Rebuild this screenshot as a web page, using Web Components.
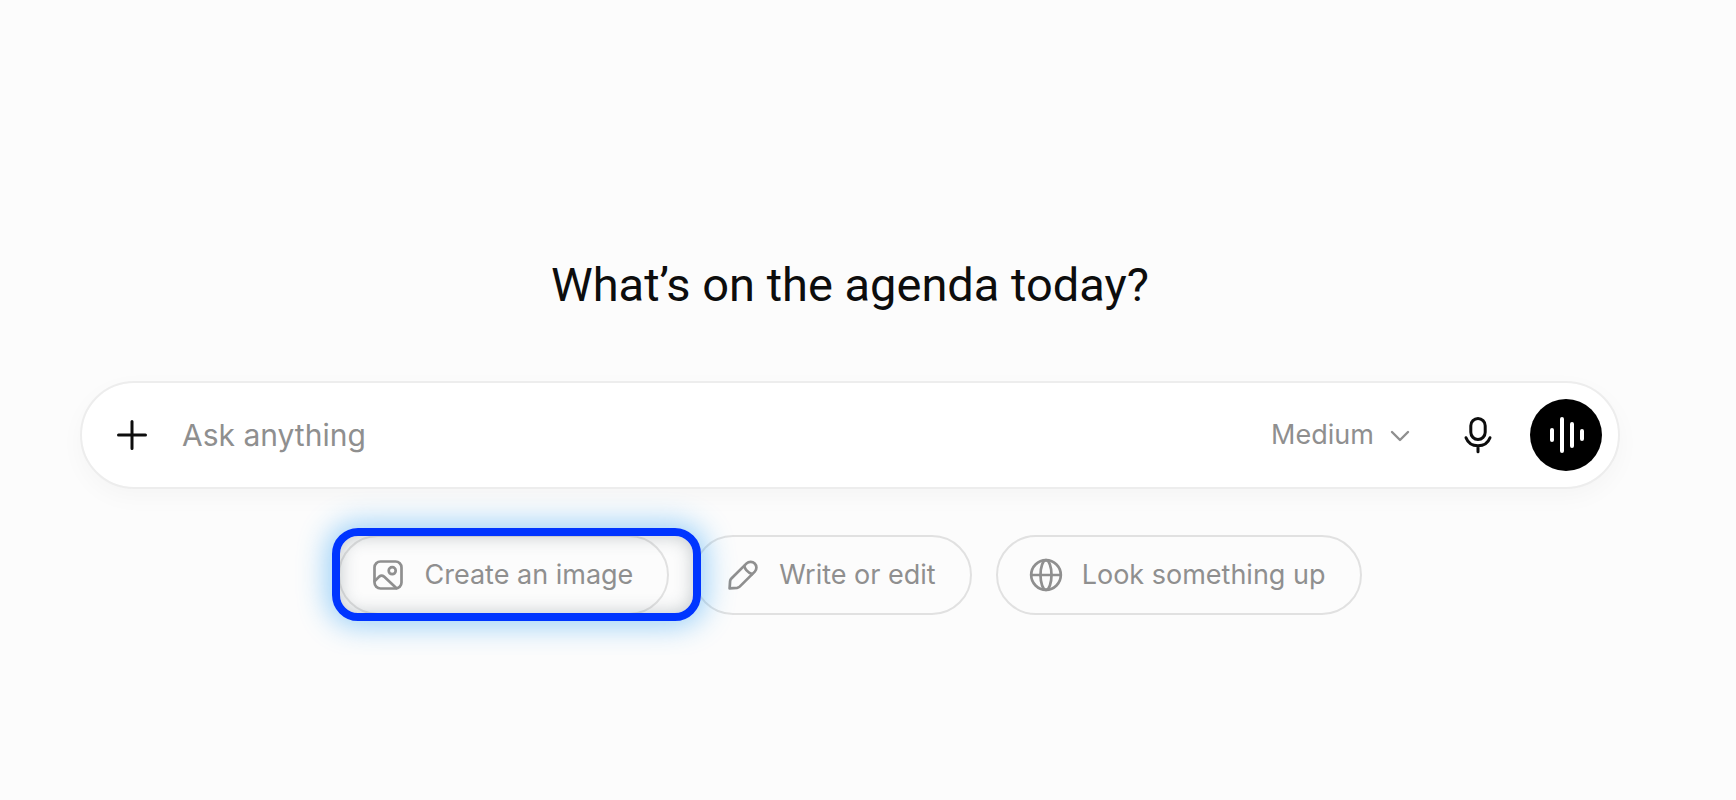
<!DOCTYPE html>
<html lang="en">
<head>
<meta charset="utf-8">
<meta name="viewport" content="width=device-width, initial-scale=1">
<title>What’s on the agenda today?</title>
<style>
  body {
    margin: 0;
    background: #fcfcfc;
    color: #0d0d0d;
    font-family: Inter, "Liberation Sans", sans-serif;
  }
</style>
</head>
<body>
<start-page>
  <span slot="title">What’s on the agenda today?</span>
  <prompt-bar slot="prompt" placeholder="Ask anything"></prompt-bar>
  <suggestion-chip icon="image" highlighted>Create an image</suggestion-chip>
  <suggestion-chip icon="pencil">Write or edit</suggestion-chip>
  <suggestion-chip icon="globe">Look something up</suggestion-chip>
</start-page>

<script>
const ICONS = {
  plus: '<path d="M20 6.5v27M6.5 20h27"/>',
  chevron: '<path d="M12 17l8 8 8-8"/>',
  mic: '<rect x="12.8" y="3.5" width="14.4" height="21" rx="7.2"/><path d="M8 22.7C10 28 15 30.7 20 30.7S30 28 32 22.7M20 30.7v6"/>',
  voice: '<path d="M6 15v10M16 4v32M26 9v22M36 16v8"/>',
  image: '<rect x="6.5" y="6.5" width="27" height="27" rx="6"/><circle cx="24.2" cy="15.7" r="3.5"/><path d="M6.8 26l4.4-4.4q2.4-2 4.8 0L28.5 33.2"/>',
  pencil: '<path d="M6.6 33.4l.5-7.2q.2-1.6 1.3-2.7L23.6 8.4a5.8 5.8 0 0 1 8.2 8.2L16.7 31.6q-1 1-2.6 1.2z"/><path d="M21.3 11q1 5.2 7.7 8"/>',
  globe: '<circle cx="20" cy="20" r="14.8"/><ellipse cx="20" cy="20" rx="5.5" ry="14.8"/><path d="M5.2 20h29.6"/>',
};

class AppIcon extends HTMLElement {
  constructor() {
    super();
    this.attachShadow({ mode: 'open' });
  }

  connectedCallback() {
    this.shadowRoot.innerHTML = `
      <style>
        :host {
          display: block;
          flex: none;
          width: 40px;
          height: 40px;
        }
        svg {
          display: block;
          fill: none;
          stroke: currentColor;
          stroke-width: var(--icon-stroke, 3);
          stroke-linecap: round;
          stroke-linejoin: round;
        }
      </style>
      <svg width="40" height="40" viewBox="0 0 40 40" aria-hidden="true">${ICONS[this.getAttribute('name')]}</svg>
    `;
  }
}

class StartPage extends HTMLElement {
  constructor() {
    super();
    this.attachShadow({ mode: 'open' });
    this.shadowRoot.innerHTML = `
      <style>
        :host {
          display: block;
        }
        main {
          display: flex;
          flex-direction: column;
          align-items: center;
          padding: 257px 116px 40px 80px;
        }
        h1 {
          margin: 0 0 68px;
          font: 400 47px/56px Roboto, "Liberation Sans", sans-serif;
        }
        .suggestions {
          display: flex;
          flex-wrap: wrap;
          justify-content: center;
          gap: 24px;
          margin-top: 46px;
        }
      </style>
      <main>
        <h1><slot name="title"></slot></h1>
        <slot name="prompt"></slot>
        <div class="suggestions"><slot></slot></div>
      </main>
    `;
  }
}

class PromptBar extends HTMLElement {
  constructor() {
    super();
    this.attachShadow({ mode: 'open' });
  }

  connectedCallback() {
    const placeholder = this.getAttribute('placeholder');
    this.shadowRoot.innerHTML = `
      <style>
        :host {
          display: block;
          align-self: stretch;
        }
        form {
          display: flex;
          align-items: center;
          padding: 16px 16px 16px 14px;
          border: 2px solid #ededed;
          border-radius: 54px;
          background: #fff;
          background-clip: padding-box;
          box-shadow: 0 8px 24px rgba(0, 0, 0, 0.03);
        }
        button {
          display: flex;
          align-items: center;
          justify-content: center;
          flex: none;
          width: 72px;
          height: 72px;
          padding: 0;
          border: 0;
          border-radius: 50%;
          background: none;
          color: inherit;
        }
        .voice {
          --icon-stroke: 4;
          margin-left: 16px;
          background: #000;
          color: #fff;
        }
        input {
          flex: 1;
          min-width: 0;
          margin-left: 14px;
          padding: 0;
          border: 0;
          outline: 0;
          background: none;
          color: inherit;
          font: 30px/40px Inter, "Liberation Sans", sans-serif;
        }
        input::placeholder {
          color: #8f8f8f;
          opacity: 1;
        }
        .effort {
          --icon-stroke: 2.4;
          display: flex;
          align-items: center;
          gap: 6px;
          margin-right: 22px;
          color: #8f8f8f;
        }
        select {
          appearance: none;
          padding: 0;
          border: 0;
          background: none;
          color: inherit;
          font: 27px/40px Inter, "Liberation Sans", sans-serif;
        }
      </style>
      <form>
        <button type="button" aria-label="Add files"><app-icon name="plus"></app-icon></button>
        <input type="text" placeholder="${placeholder}" aria-label="${placeholder}">
        <label class="effort">
          <select aria-label="Effort"><option>Medium</option></select>
          <app-icon name="chevron"></app-icon>
        </label>
        <button type="button" aria-label="Dictate"><app-icon name="mic"></app-icon></button>
        <button type="button" class="voice" aria-label="Voice mode"><app-icon name="voice"></app-icon></button>
      </form>
    `;
  }
}

class SuggestionChip extends HTMLElement {
  constructor() {
    super();
    this.attachShadow({ mode: 'open' });
  }

  connectedCallback() {
    this.shadowRoot.innerHTML = `
      <style>
        :host {
          display: block;
          position: relative;
        }
        button {
          --icon-stroke: 2.7;
          display: flex;
          align-items: center;
          gap: 16px;
          height: 80px;
          padding: 0 34px 0 28px;
          border: 2px solid #e1e1e1;
          border-radius: 40px;
          background: none;
          color: #8f8f8f;
          font: 27px/40px Inter, "Liberation Sans", sans-serif;
          white-space: nowrap;
        }
        /* focus frame, drawn over the chip and the edge of the next one */
        :host([highlighted]) {
          z-index: 1;
        }
        :host([highlighted])::after {
          content: "";
          position: absolute;
          inset: -7px -32px -6px -6px;
          box-sizing: border-box;
          border: 8px solid #0035ff;
          border-radius: 26px;
          box-shadow: 0 0 28px 6px rgba(30, 155, 245, 0.42), inset 0 0 18px rgba(70, 90, 100, 0.32);
          pointer-events: none;
        }
      </style>
      <button type="button">
        <app-icon name="${this.getAttribute('icon')}"></app-icon>
        <slot></slot>
      </button>
    `;
  }
}

customElements.define('app-icon', AppIcon);
customElements.define('start-page', StartPage);
customElements.define('prompt-bar', PromptBar);
customElements.define('suggestion-chip', SuggestionChip);
</script>
</body>
</html>
